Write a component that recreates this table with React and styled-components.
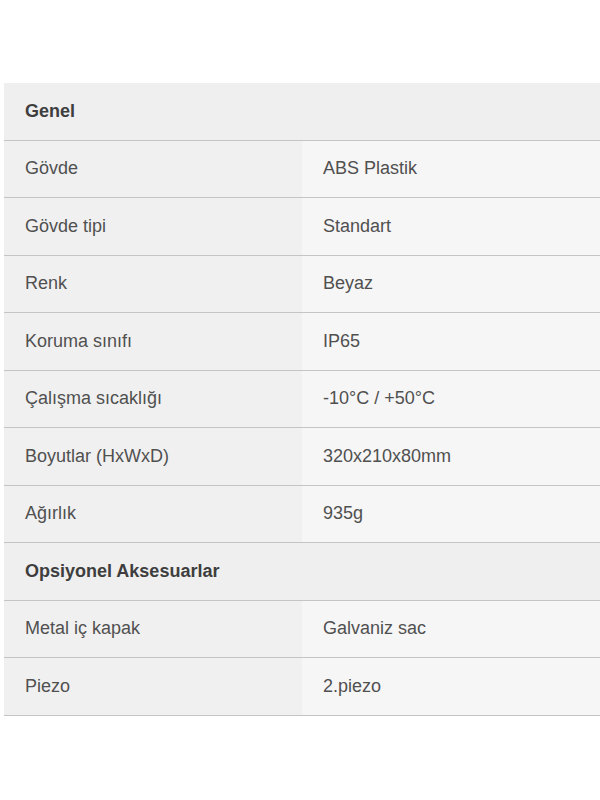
import React from 'react';
import styled, { createGlobalStyle } from 'styled-components';

//======= STYLES =======//

const GlobalStyle = createGlobalStyle`
  body {
    margin: 0;
    background: #ffffff;
    font-family: "Liberation Sans", Arial, sans-serif;
  }
`
const Page = styled.div`
  padding: 83px 0 0 4px;
`
const SpecTable = styled.div`
  display: flex;
  flex-direction: column;
  width: 596px;
`
const Row = styled.div`
  display: grid;
  grid-template-columns: 298px 1fr;
  height: 56.5px;
  border-bottom: 1px solid #c4c4c4;
  background: ${(props) => (props.heading ? '#efefef' : 'transparent')};
`
const Cell = styled.div`
  display: flex;
  align-items: center;
  padding-left: 21px;
  font-size: 18px;
  font-weight: ${(props) => (props.heading ? 'bold' : 'normal')};
  color: ${(props) => (props.heading ? '#3e3e3e' : '#505050')};
  background: ${(props) => {
    if (props.heading) return 'transparent'
    return props.value ? '#f6f6f6' : '#f0f0f0'
  }};
`

//======= DATA =======//

const sections = [
  {
    title: 'Genel',
    rows: [
      ['Gövde', 'ABS Plastik'],
      ['Gövde tipi', 'Standart'],
      ['Renk', 'Beyaz'],
      ['Koruma sınıfı', 'IP65'],
      ['Çalışma sıcaklığı', '-10°C / +50°C'],
      ['Boyutlar (HxWxD)', '320x210x80mm'],
      ['Ağırlık', '935g'],
    ],
  },
  {
    title: 'Opsiyonel Aksesuarlar',
    rows: [
      ['Metal iç kapak', 'Galvaniz sac'],
      ['Piezo', '2.piezo'],
    ],
  },
]

//======= COMPONENT =======//

const App = () => {
  return (
    <Page>
      <GlobalStyle />
      <SpecTable>
        {sections.map((section) => (
          <React.Fragment key={section.title}>
            <Row heading>
              <Cell heading>{section.title}</Cell>
              <Cell heading />
            </Row>
            {section.rows.map(([label, value]) => (
              <Row key={label}>
                <Cell>{label}</Cell>
                <Cell value>{value}</Cell>
              </Row>
            ))}
          </React.Fragment>
        ))}
      </SpecTable>
    </Page>
  )
}

export default App;
